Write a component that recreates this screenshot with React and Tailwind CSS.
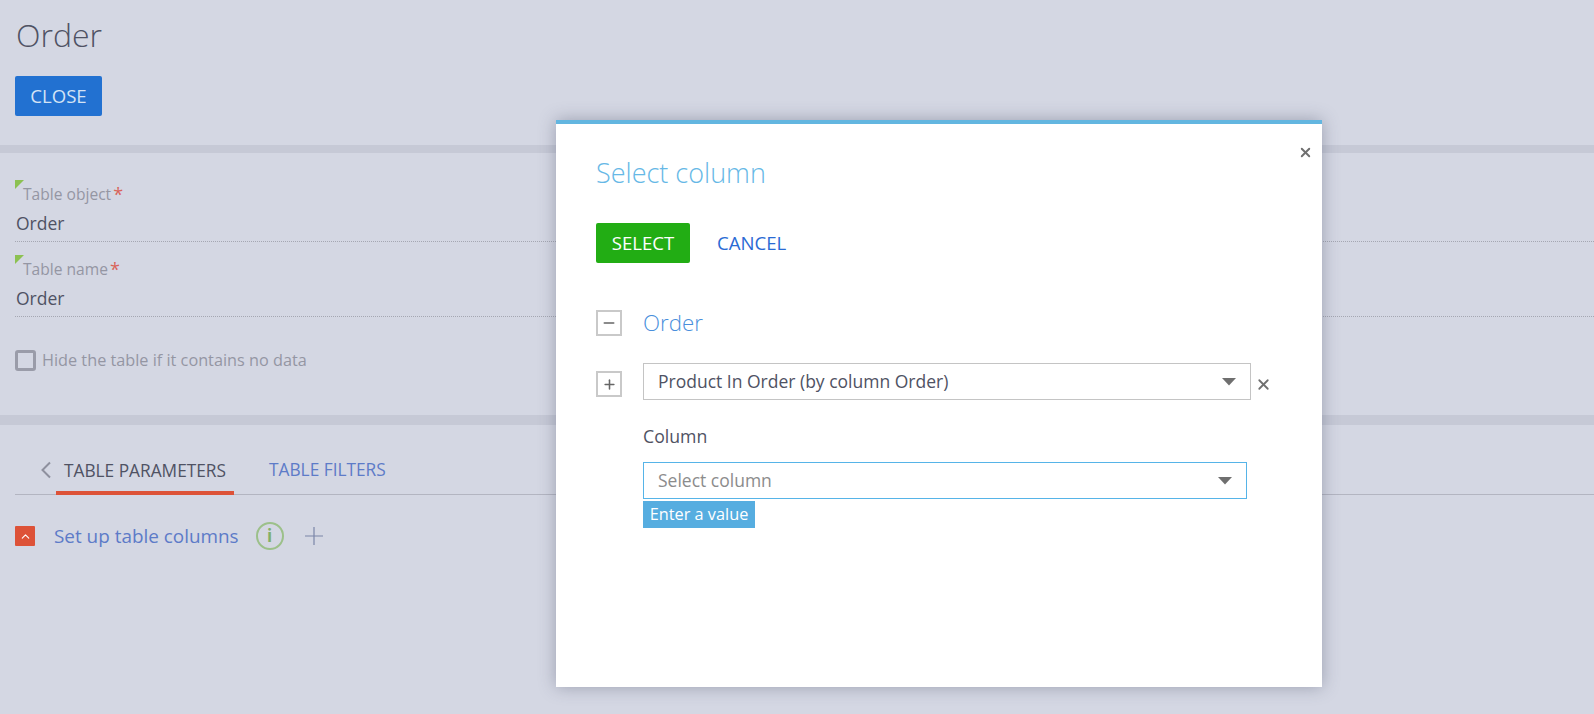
import React from 'react'
import { X, ChevronUp, Plus, Minus } from 'lucide-react'

const Caret = () => (
  <svg width="14" height="8" viewBox="0 0 14 8" className="shrink-0">
    <path d="M0 0h14L7 7.5z" fill="#6f6f6f" />
  </svg>
)

const Field = ({ label, value }) => (
  <div className="relative h-[75px] pt-[3px]">
    <span className="absolute left-0 top-0 h-0 w-0 border-t-[9px] border-r-[9px] border-t-[#8cc152] border-r-transparent" />
    <div className="ml-2 flex h-[22px] items-center text-[15.6px] leading-[22px] text-[#9496a3]">
      {label}
      <span className="ml-[2px] text-[18px] leading-[22px] text-[#d9645a]">*</span>
    </div>
    <div className="mt-[7px] flex h-[22px] items-center px-[1px] text-[17.5px] text-[#4f5263]">{value}</div>
    <div className="mt-[7px] border-b border-dotted border-[#a5a7b2]" />
  </div>
)

const TreeButton = ({ children }) => (
  <div className="flex h-[26px] w-[26px] shrink-0 items-center justify-center border-2 border-[#c9c9c9] bg-white text-[#666]">
    {children}
  </div>
)

const SelectBox = ({ text, muted, focused, width }) => (
  <div
    className={`flex h-[37px] items-center justify-between border pl-[14px] pr-[14px] text-[17.5px] ${width} ${
      focused ? 'border-[#56b4e8]' : 'border-[#c4c4c4]'
    } ${muted ? 'text-[#8c8c8c]' : 'text-[#4f5263]'}`}
  >
    <span>{text}</span>
    <Caret />
  </div>
)

export default function App() {
  return (
    <div className="relative h-[714px] w-full overflow-hidden bg-[#d4d7e3] font-['Open_Sans',sans-serif]">
      <div className="px-[15px] pt-[12px]">
        <h1 className="flex h-[46px] items-center pl-[1px] text-[32px] font-light text-[#4f5263]">Order</h1>
        <button className="mt-[18px] flex h-[40px] w-[87px] items-center justify-center rounded-[2px] bg-[#2271d1] text-[18.6px] text-[#d4e3f5]">
          CLOSE
        </button>
      </div>

      <div className="mt-[29px] h-2 bg-[#c6c9d6]" />

      <div className="pl-[15px] pt-[27px]">
        <Field label="Table object" value="Order" />
        <Field label="Table name" value="Order" />
        <label className="mt-[18px] flex items-center gap-[6px] text-[16.25px] leading-[24px] text-[#9496a3]">
          <span className="h-[21px] w-[21px] rounded-[3px] border-[3px] border-[#9a9ca9]" />
          Hide the table if it contains no data
        </label>
      </div>

      <div className="mt-[43px] h-[10px] bg-[#c6c9d6]" />

      <div className="pl-[15px]">
        <div className="flex h-[70px] items-end border-b border-[#b3b5c1] pl-[23px]">
          <div className="h-[46px] w-[18px] pt-[13px]">
            <svg width="12" height="18" viewBox="0 0 12 18" className="ml-[2px]">
              <path d="M10 1.5 2.5 9l7.5 7.5" stroke="#8e909e" strokeWidth="2" fill="none" />
            </svg>
          </div>
          <div className="-mb-px flex h-[46px] w-[178px] justify-center border-b-4 border-[#dd5238] pt-[9px] text-[17.3px] leading-[26px] text-[#4f5263]">
            TABLE PARAMETERS
          </div>
          <div className="flex h-[46px] pl-[35px] pt-[9px] text-[17.3px] leading-[26px] text-[#5d7bc8]">TABLE FILTERS</div>
        </div>

        <div className="mt-[27px] flex items-center">
          <div className="flex h-[20px] w-[20px] items-center justify-center rounded-[1px] bg-[#dd5238] text-white">
            <ChevronUp size={13} strokeWidth={2} />
          </div>
          <span className="ml-[19px] text-[18.9px] leading-[28px] text-[#5d7bc8]">Set up table columns</span>
          <span className="ml-[17px] flex h-[28px] w-[28px] items-center justify-center rounded-full border-2 border-[#9cc08a] text-[17px] font-bold text-[#7fb069]">
            i
          </span>
          <svg width="18" height="18" viewBox="0 0 18 18" className="ml-[21px]">
            <path d="M9 0v18M0 9h18" stroke="#7b86a8" strokeWidth="1.2" fill="none" />
          </svg>
        </div>
      </div>

      {/* dialog */}
      <div className="absolute left-[556px] top-[120px] h-[567px] w-[766px] border-t-4 border-[#63b6e0] bg-white shadow-[0_0_16px_rgba(70,75,100,0.4)]">
        <X size={15} strokeWidth={3} className="absolute right-[9px] top-[21px] text-[#6f6f6f]" />
        <div className="px-10 pt-[29px]">
          <h2 className="text-[27px] font-light leading-[40px] text-[#66b8e6]">Select column</h2>
          <div className="mt-[30px] flex items-center">
            <button className="flex h-[40px] w-[94px] items-center justify-center rounded-[2px] bg-[#22ad14] text-[18.6px] text-white">
              SELECT
            </button>
            <span className="ml-[27px] text-[18.6px] text-[#2a6ad4]">CANCEL</span>
          </div>

          <div className="mt-[44px] flex h-[31px] items-center">
            <TreeButton>
              <Minus size={16} strokeWidth={2.5} />
            </TreeButton>
            <span className="ml-[21px] text-[22.3px] font-light text-[#4a8fdc]">Order</span>
          </div>

          <div className="mt-[25px] flex items-center">
            <div className="mt-[5px]">
              <TreeButton>
                <Plus size={15} strokeWidth={2.5} />
              </TreeButton>
            </div>
            <div className="ml-[21px]">
              <SelectBox text="Product In Order (by column Order)" width="w-[608px]" />
            </div>
            <X size={17} strokeWidth={2.5} className="ml-[4px] mt-[6px] text-[#6f6f6f]" />
          </div>

          <div className="ml-[47px]">
            <div className="mt-[25px] text-[17.7px] leading-[22px] text-[#4f5263]">Column</div>
            <div className="mt-[15px]">
              <SelectBox text="Select column" muted focused width="w-[604px]" />
            </div>
            <div className="mt-[2px] flex h-[27px] w-[112px] items-center justify-center bg-[#56ade0] text-[16.3px] text-white">
              Enter a value
            </div>
          </div>
        </div>
      </div>
    </div>
  )
}
